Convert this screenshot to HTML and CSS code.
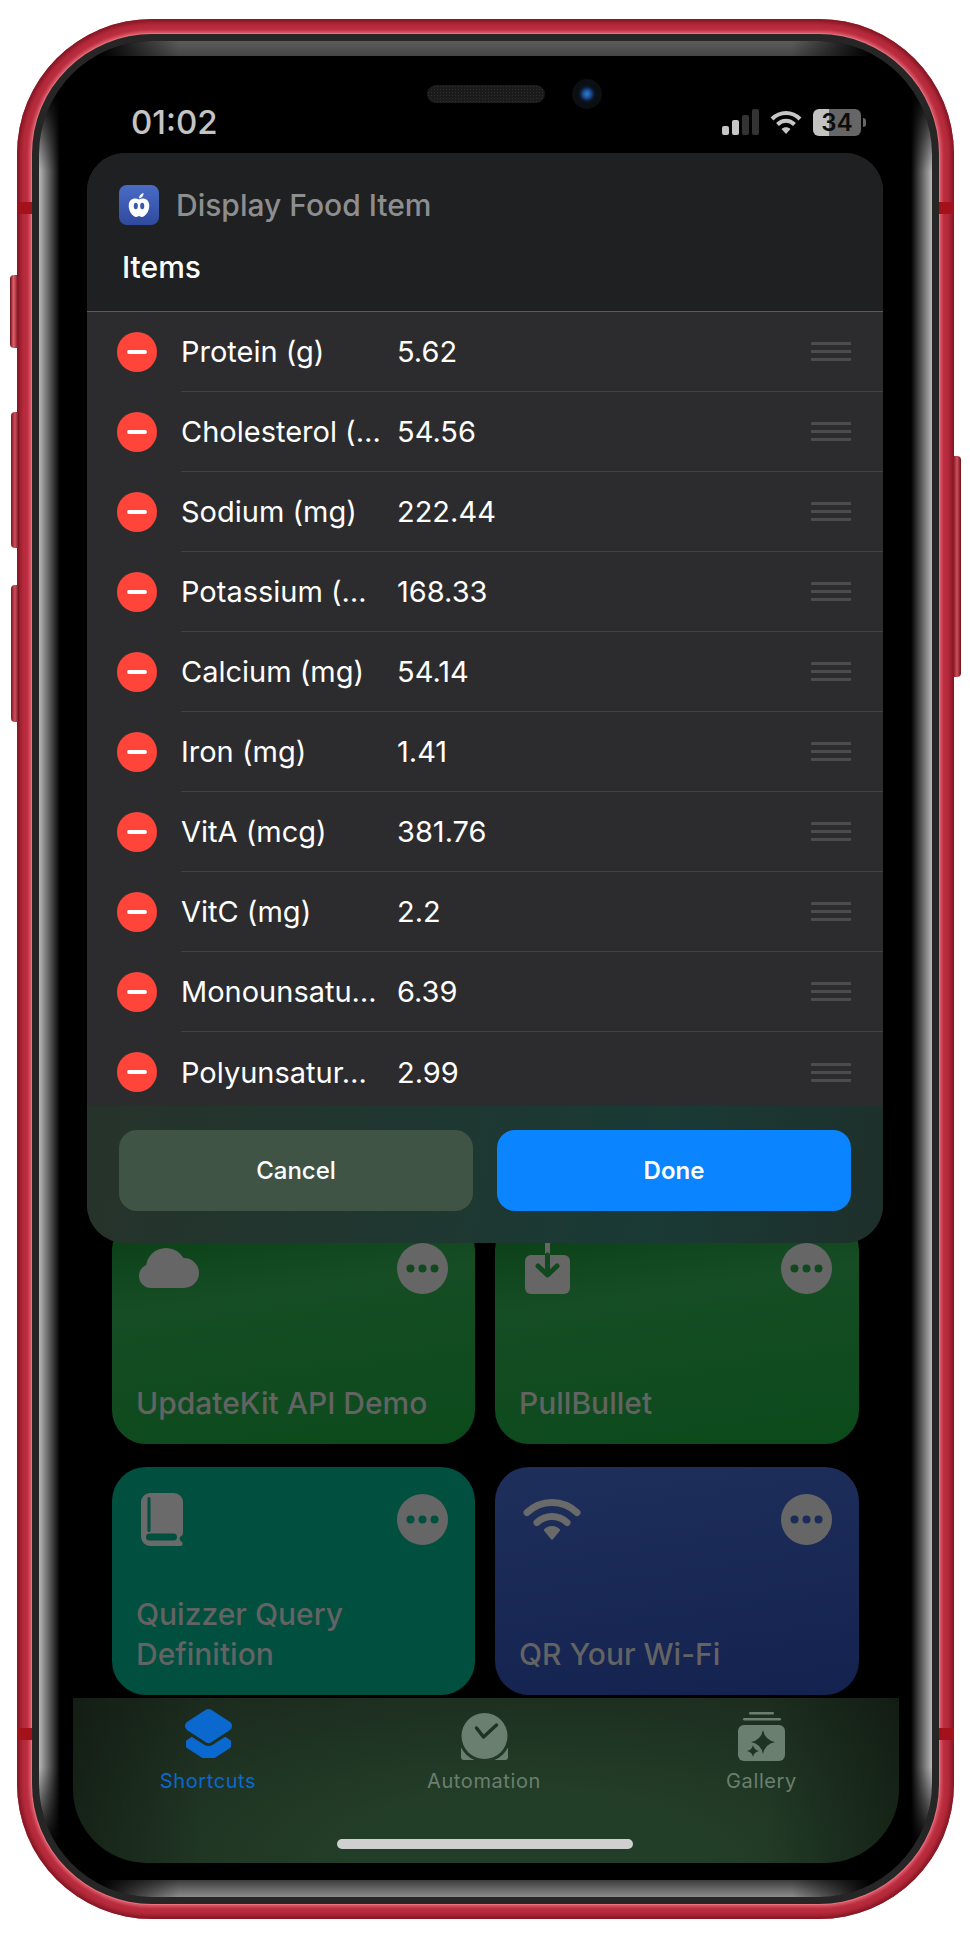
FILE: index.html
```html
<!DOCTYPE html>
<html lang="en">
<head>
    <meta charset="UTF-8">
    <title>Display Food Item</title>
    <link rel="stylesheet" href="styles.css">
</head>
<body>
    <div class="phone">
        <!-- Hardware buttons -->
        <span class="side-btn btn-mute"></span>
        <span class="side-btn btn-up"></span>
        <span class="side-btn btn-down"></span>
        <span class="side-btn btn-power"></span>
        <span class="band band-tl"></span>
        <span class="band band-tr"></span>
        <span class="band band-bl"></span>
        <span class="band band-br"></span>

        <div class="rim">
            <div class="bezel">
                <div class="screen">
                    <span class="speaker"></span>
                    <span class="camera"></span>

                    <div class="status">
                        <span class="time">01:02</span>
                        <div class="status-icons">
                            <svg width="37" height="26" viewBox="0 0 37 26">
                                <rect x="0" y="17" width="7" height="9" rx="2" fill="#c6c6c6"/>
                                <rect x="10" y="11" width="7" height="15" rx="2" fill="#c6c6c6"/>
                                <rect x="20" y="6" width="7" height="20" rx="2" fill="#333"/>
                                <rect x="30" y="0" width="7" height="26" rx="2" fill="#333"/>
                            </svg>
                            <svg width="32" height="24" viewBox="0 0 32 24">
                                <g fill="none" stroke="#c6c6c6" stroke-width="4">
                                    <path d="M2 9C10 1 22 1 30 9"/>
                                    <path d="M7.500 14.500C12.500 9.500 19.500 9.500 24.500 14.500"/>
                                </g>
                                <path d="M11.500 19C14 16.500 18 16.500 20.500 19L16 24Z" fill="#c6c6c6"/>
                            </svg>
                            <div class="battery"><span>34</span></div>
                        </div>
                    </div>

                    <div class="home">
                        <div class="shortcuts">
                            <div class="card green">
                                <div class="card-top">
                                    <svg class="glyph glyph-cloud" width="60" height="40" viewBox="0 0 60 40" fill="#666">
                                        <circle cx="12" cy="28" r="12"/>
                                        <circle cx="27" cy="20" r="20"/>
                                        <circle cx="45" cy="25" r="15"/>
                                        <rect x="12" y="20" width="33" height="20"/>
                                    </svg>
                                    <svg class="more" width="51" height="51" viewBox="0 0 51 51">
                                        <circle cx="25.500" cy="25.500" r="25.500" fill="#666"/>
                                        <circle cx="13.500" cy="25.500" r="4" fill="currentColor"/>
                                        <circle cx="25.500" cy="25.500" r="4" fill="currentColor"/>
                                        <circle cx="37.500" cy="25.500" r="4" fill="currentColor"/>
                                    </svg>
                                </div>
                                <div class="card-title">UpdateKit API Demo</div>
                            </div>
                            <div class="card green">
                                <div class="card-top">
                                    <svg class="glyph glyph-box" width="45" height="51" viewBox="0 0 45 51">
                                        <rect x="20" y="0" width="5" height="14" fill="#666"/>
                                        <rect x="0" y="12" width="45" height="39" rx="6" fill="#666"/>
                                        <path d="M22.500 12V30M13 23L22.500 32L32 23" fill="none" stroke="#11491f" stroke-width="5" stroke-linecap="round" stroke-linejoin="round"/>
                                    </svg>
                                    <svg class="more" width="51" height="51" viewBox="0 0 51 51">
                                        <circle cx="25.500" cy="25.500" r="25.500" fill="#666"/>
                                        <circle cx="13.500" cy="25.500" r="4" fill="currentColor"/>
                                        <circle cx="25.500" cy="25.500" r="4" fill="currentColor"/>
                                        <circle cx="37.500" cy="25.500" r="4" fill="currentColor"/>
                                    </svg>
                                </div>
                                <div class="card-title">PullBullet</div>
                            </div>
                            <div class="card teal">
                                <div class="card-top">
                                    <svg class="glyph glyph-book" width="42" height="53" viewBox="0 0 42 53">
                                        <path d="M9 0H33A9 9 0 0 1 42 9V40C42 42 40.500 43 39 44C38 46 39 47.500 41 49C42.500 50.500 41.500 53 39 53H9A9 9 0 0 1 0 44V9A9 9 0 0 1 9 0Z" fill="#6a6a6a"/>
                                        <rect x="6.500" y="4" width="3" height="35" rx="1.500" fill="#014f3f"/>
                                        <rect x="5" y="40.500" width="31" height="7" rx="3.500" fill="#014f3f"/>
                                    </svg>
                                    <svg class="more" width="51" height="51" viewBox="0 0 51 51">
                                        <circle cx="25.500" cy="25.500" r="25.500" fill="#666"/>
                                        <circle cx="13.500" cy="25.500" r="4" fill="currentColor"/>
                                        <circle cx="25.500" cy="25.500" r="4" fill="currentColor"/>
                                        <circle cx="37.500" cy="25.500" r="4" fill="currentColor"/>
                                    </svg>
                                </div>
                                <div class="card-title">Quizzer Query Definition</div>
                            </div>
                            <div class="card blue">
                                <div class="card-top">
                                    <svg class="glyph glyph-wifi" width="58" height="42" viewBox="0 0 58 42">
                                        <g fill="none" stroke="#6a6a6a" stroke-width="7" stroke-linecap="round">
                                            <path d="M4 14.500C18 1 40 1 54 14.500"/>
                                            <path d="M14 24.500C22.500 16.500 35.500 16.500 44 24.500"/>
                                        </g>
                                        <path d="M22.500 32C26 28.500 32 28.500 35.500 32L29 40Z" fill="#6a6a6a" stroke="#6a6a6a" stroke-width="3" stroke-linejoin="round"/>
                                    </svg>
                                    <svg class="more" width="51" height="51" viewBox="0 0 51 51">
                                        <circle cx="25.500" cy="25.500" r="25.500" fill="#666"/>
                                        <circle cx="13.500" cy="25.500" r="4" fill="currentColor"/>
                                        <circle cx="25.500" cy="25.500" r="4" fill="currentColor"/>
                                        <circle cx="37.500" cy="25.500" r="4" fill="currentColor"/>
                                    </svg>
                                </div>
                                <div class="card-title">QR Your Wi-Fi</div>
                            </div>
                        </div>
                    </div>

                    <!-- Tab bar -->
                    <div class="tabbar">
                        <div class="tab active">
                            <svg width="47" height="54" viewBox="0 0 47 54">
                                <mask id="stack-cut">
                                    <rect width="47" height="54" fill="#fff"/>
                                    <polygon points="5,18 23.500,6 42,18 23.500,30" fill="#000" stroke="#000" stroke-width="16" stroke-linejoin="round"/>
                                </mask>
                                <polygon mask="url(#stack-cut)" points="5,36 23.500,24 42,36 23.500,48" fill="#0a68cf" stroke="#0a68cf" stroke-width="10" stroke-linejoin="round"/>
                                <polygon points="5,18 23.500,6 42,18 23.500,30" fill="#0a68cf" stroke="#0a68cf" stroke-width="10" stroke-linejoin="round"/>
                            </svg>
                            <span>Shortcuts</span>
                        </div>
                        <div class="tab">
                            <svg width="47" height="54" viewBox="0 0 47 54">
                                <mask id="clock-cut">
                                    <rect width="47" height="54" fill="#fff"/>
                                    <circle cx="23.500" cy="28" r="26" fill="#000"/>
                                </mask>
                                <path mask="url(#clock-cut)" d="M0 39H47V49A3 3 0 0 1 44 52H3A3 3 0 0 1 0 49Z" fill="#6b7f70"/>
                                <circle cx="23.500" cy="28" r="23" fill="#6b7f70"/>
                                <path d="M15.500 20L22.500 29L35.500 17" fill="none" stroke="#1f3323" stroke-width="3.500" stroke-linecap="round" stroke-linejoin="round"/>
                            </svg>
                            <span>Automation</span>
                        </div>
                        <div class="tab">
                            <svg width="47" height="54" viewBox="0 0 47 54">
                                <rect x="11" y="4" width="25" height="2.500" rx="1.200" fill="#6b7f70"/>
                                <rect x="5" y="10" width="38" height="2.500" rx="1.200" fill="#6b7f70"/>
                                <rect x="0" y="17" width="47" height="36" rx="6" fill="#6b7f70"/>
                                <path transform="translate(25 34)" d="M0 -12Q2 -2 12 0Q2 2 0 12Q-2 2 -12 0Q-2 -2 0 -12Z" fill="#1f3323"/>
                                <path transform="translate(15 43)" d="M0 -6Q1 -1 6 0Q1 1 0 6Q-1 1 -6 0Q-1 -1 0 -6Z" fill="#1f3323"/>
                            </svg>
                            <span>Gallery</span>
                        </div>
                        <span class="home-bar"></span>
                    </div>

                    <!-- Sheet di atas layar -->
                    <div class="sheet">
                        <div class="sheet-head">
                            <div class="app-line">
                                <span class="app-icon">
                                    <svg width="24" height="26" viewBox="0 0 26 28">
                                        <path d="M13 8C9 6 3 7 2 13C1 20 6 27 10 27C11.500 27 12 26 13 26C14 26 14.500 27 16 27C20 27 25 20 24 13C23 7 17 6 13 8Z" fill="#fff"/>
                                        <path d="M13 7C13 4 15 1.500 18 1C18 4 16 6.500 13 7Z" fill="#fff"/>
                                        <ellipse cx="9.500" cy="15" rx="2.200" ry="3.500" fill="#3a58ad"/>
                                        <ellipse cx="16.500" cy="15" rx="2.200" ry="3.500" fill="#3a58ad"/>
                                    </svg>
                                </span>
                                <span class="app-name">Display Food Item</span>
                            </div>
                            <div class="sheet-label">Items</div>
                        </div>

                        <div class="rows">
                            <div class="row"><span class="minus"></span><div class="row-body"><span class="row-key">Protein (g)</span><span class="row-val">5.62</span><span class="grip"></span></div></div>
                            <div class="row"><span class="minus"></span><div class="row-body"><span class="row-key">Cholesterol (…</span><span class="row-val">54.56</span><span class="grip"></span></div></div>
                            <div class="row"><span class="minus"></span><div class="row-body"><span class="row-key">Sodium (mg)</span><span class="row-val">222.44</span><span class="grip"></span></div></div>
                            <div class="row"><span class="minus"></span><div class="row-body"><span class="row-key">Potassium (…</span><span class="row-val">168.33</span><span class="grip"></span></div></div>
                            <div class="row"><span class="minus"></span><div class="row-body"><span class="row-key">Calcium (mg)</span><span class="row-val">54.14</span><span class="grip"></span></div></div>
                            <div class="row"><span class="minus"></span><div class="row-body"><span class="row-key">Iron (mg)</span><span class="row-val">1.41</span><span class="grip"></span></div></div>
                            <div class="row"><span class="minus"></span><div class="row-body"><span class="row-key">VitA (mcg)</span><span class="row-val">381.76</span><span class="grip"></span></div></div>
                            <div class="row"><span class="minus"></span><div class="row-body"><span class="row-key">VitC (mg)</span><span class="row-val">2.2</span><span class="grip"></span></div></div>
                            <div class="row"><span class="minus"></span><div class="row-body"><span class="row-key">Monounsatu…</span><span class="row-val">6.39</span><span class="grip"></span></div></div>
                            <div class="row"><span class="minus"></span><div class="row-body"><span class="row-key">Polyunsatur…</span><span class="row-val">2.99</span><span class="grip"></span></div></div>
                        </div>

                        <div class="sheet-foot">
                            <button class="btn btn-cancel">Cancel</button>
                            <button class="btn btn-done">Done</button>
                        </div>
                    </div>
                </div>
            </div>
        </div>
    </div>
</body>
</html>
```

FILE: styles.css
```css
* {
    box-sizing: border-box;
}
body {
    margin: 0;
    background-color: white;
    font-family: Inter, "Noto Sans", sans-serif;
    color: white;
}
.phone {
    position: relative;
    width: 937px;
    height: 1900px;
    margin: 19px 0 0 17px;
    padding: 15px;
    border-radius: 135px;
    background-color: #b92c3e;
    box-shadow: inset 0 0 5px 3px #7f141f;
}
.side-btn {
    position: absolute;
    width: 8px;
    border-radius: 4px 0 0 4px;
    background: linear-gradient(to right, #6d0f18, #e0606c 45%, #7d1420);
}
.btn-mute {
    left: -7px;
    top: 256px;
    height: 73px;
}
.btn-up {
    left: -6px;
    top: 393px;
    height: 136px;
    background: linear-gradient(to right, #7d1420, #d0505c 50%, #6d0f18);
}
.btn-down {
    left: -6px;
    top: 566px;
    height: 137px;
    background: linear-gradient(to right, #7d1420, #d0505c 50%, #6d0f18);
}
.btn-power {
    right: -7px;
    top: 437px;
    height: 221px;
    border-radius: 0 4px 4px 0;
    background: linear-gradient(to right, #7d1420, #d0505c 50%, #6d0f18);
}
.band {
    position: absolute;
    width: 15px;
    height: 12px;
    background-color: #a3121a;
}
.band-tl {
    left: 0;
    top: 183px;
}
.band-tr {
    right: 0;
    top: 183px;
}
.band-bl {
    left: 0;
    top: 1709px;
}
.band-br {
    right: 0;
    top: 1709px;
}
.rim {
    height: 100%;
    padding: 7px;
    border-radius: 120px;
    background-color: #262626;
    box-shadow: 0 0 0 1px #e8727e, 0 0 3px 3px #db5a68;
}
.bezel {
    position: relative;
    height: 100%;
    padding: 15px 33px 34px 34px;
    border-radius: 113px;
    background-color: black;
    overflow: hidden;
}
.bezel::before {
    content: "";
    position: absolute;
    inset: 0;
    background:
        linear-gradient(to bottom, #5c5c5c, #454545) top / 100% 15px no-repeat,
        linear-gradient(to bottom, #3c3c3c, #8c8c8c) bottom / 100% 17px no-repeat;
    -webkit-mask-image: linear-gradient(to right, transparent 60px, black 140px, black 753px, transparent 833px);
    mask-image: linear-gradient(to right, transparent 60px, black 140px, black 753px, transparent 833px);
}
.bezel::after {
    content: "";
    position: absolute;
    inset: 0;
    background:
        linear-gradient(to right, #b8b8b8, black) left / 21px 100% no-repeat,
        linear-gradient(to left, #b8b8b8, black) right / 21px 100% no-repeat;
    -webkit-mask-image: linear-gradient(to bottom, transparent 50px, black 130px, black 1726px, transparent 1806px);
    mask-image: linear-gradient(to bottom, transparent 50px, black 130px, black 1726px, transparent 1806px);
}
.screen {
    position: relative;
    z-index: 1;
    display: flex;
    flex-direction: column;
    height: 100%;
    border-radius: 74px;
    background-color: black;
    overflow: hidden;
}
.speaker {
    position: absolute;
    left: 354px;
    top: 29px;
    width: 118px;
    height: 18px;
    border-radius: 9px;
    background-color: #1b1b1b;
    background-image: radial-gradient(#2f2f2f 1px, transparent 1px);
    background-size: 3px 3px;
}
.camera {
    position: absolute;
    left: 499px;
    top: 23px;
    width: 30px;
    height: 30px;
    border-radius: 50%;
    background: radial-gradient(circle, #2f7fd0 0, #1a4d94 4px, #0c1a33 7px, #0b0e13 9px);
}
.status {
    display: flex;
    justify-content: space-between;
    align-items: center;
    height: 132px;
    padding: 0 38px 0 58px;
    flex-shrink: 0;
}
.time {
    font-size: 33px;
    font-weight: 500;
    color: #c4c4c4;
}
.status-icons {
    display: flex;
    align-items: center;
    gap: 11px;
}
.battery {
    position: relative;
    width: 48px;
    height: 27px;
    border-radius: 6px;
    background: linear-gradient(to right, #c2c2c2 34%, #666 34%);
    color: #0c0c0c;
    font-size: 24px;
    font-weight: 600;
    line-height: 27px;
    text-align: center;
}
.battery::after {
    content: "";
    position: absolute;
    right: -5px;
    top: 9px;
    width: 3px;
    height: 9px;
    border-radius: 0 3px 3px 0;
    background-color: #666;
}
.home {
    display: flex;
    flex-direction: column;
    justify-content: flex-end;
    flex: 1;
    padding: 0 39px 3px;
}
.shortcuts {
    display: grid;
    grid-template-columns: 363px 364px;
    grid-auto-rows: 228px;
    gap: 23px 20px;
}
.card {
    display: flex;
    flex-direction: column;
    justify-content: space-between;
    padding: 27px 27px 21px 24px;
    border-radius: 34px;
}
.card.green {
    background: linear-gradient(172deg, #0c4118 8%, #164d24 35%, #0b4a1b 100%);
    color: #11491f;
}
.card.teal {
    background-color: #014f3f;
    color: #014f3f;
}
.card.blue {
    background: linear-gradient(172deg, #1f2f5c, #13224f);
    color: #1c2c59;
}
.card-top {
    display: flex;
    justify-content: space-between;
    align-items: flex-start;
}
.glyph-cloud {
    margin: 5px 0 0 3px;
}
.glyph-box {
    margin-left: 6px;
}
.glyph-book {
    margin: -1px 0 0 5px;
}
.glyph-wifi {
    margin: 4px 0 0 4px;
}
.card-title {
    max-width: 300px;
    font-size: 30px;
    font-weight: 500;
    line-height: 40px;
    color: #636363;
}
.tabbar {
    position: relative;
    display: grid;
    grid-template-columns: 270px 282px 273px;
    flex-shrink: 0;
    height: 165px;
    padding-top: 10px;
    background:
        linear-gradient(to right, rgba(0, 0, 0, 0.28), transparent 16%, transparent 84%, rgba(0, 0, 0, 0.32)),
        radial-gradient(ellipse at 55% 100%, #233e28 28%, #1b291d 92%);
}
.tab {
    display: flex;
    flex-direction: column;
    align-items: center;
    gap: 8px;
    font-size: 20px;
    line-height: 23px;
    letter-spacing: 0.6px;
    color: #6b7f70;
}
.tab.active {
    color: #0a68cf;
}
.home-bar {
    position: absolute;
    left: 264px;
    bottom: 14px;
    width: 296px;
    height: 10px;
    border-radius: 5px;
    background-color: #d0d0d0;
}
.sheet {
    position: absolute;
    left: 14px;
    top: 97px;
    width: 796px;
    height: 1090px;
    display: flex;
    flex-direction: column;
    border-radius: 38px;
    background-color: #2c2c2e;
    overflow: hidden;
}
.sheet-head {
    flex-shrink: 0;
    height: 159px;
    padding: 32px 0 0 32px;
    background-color: #1f2021;
    border-bottom: 1px solid #5a5a5a;
}
.app-line {
    display: flex;
    align-items: center;
    gap: 17px;
}
.app-icon {
    display: flex;
    align-items: center;
    justify-content: center;
    width: 40px;
    height: 40px;
    border-radius: 8px;
    background: linear-gradient(#4a6cc6, #2f4a9e);
}
.app-name {
    font-size: 30px;
    font-weight: 500;
    color: #8e8e90;
}
.sheet-label {
    margin: 24px 0 0 3px;
    font-size: 30px;
    font-weight: 500;
    line-height: 36px;
}
.rows {
    flex: 1;
    overflow: hidden;
}
.row {
    display: flex;
    align-items: center;
    height: 80px;
    padding-left: 30px;
}
.minus {
    position: relative;
    flex-shrink: 0;
    width: 40px;
    height: 40px;
    margin: -1px 24px 0 0;
    border-radius: 50%;
    background-color: #ff453a;
}
.minus::after {
    content: "";
    position: absolute;
    left: 10px;
    top: 18px;
    width: 20px;
    height: 4px;
    border-radius: 2px;
    background-color: white;
}
.row-body {
    display: flex;
    align-items: center;
    flex: 1;
    height: 80px;
    padding-right: 32px;
    border-bottom: 1px solid #444446;
    font-size: 29px;
}
.row:last-child .row-body {
    border-bottom: none;
}
.row-key {
    width: 216px;
    white-space: nowrap;
    overflow: hidden;
}
.row-val {
    flex: 1;
}
.grip {
    width: 40px;
    height: 19px;
    border-radius: 1px;
    background: linear-gradient(#4c4c4e 3px, transparent 3px, transparent 8px, #4c4c4e 8px, #4c4c4e 11px, transparent 11px, transparent 16px, #4c4c4e 16px);
}
.sheet-foot {
    display: flex;
    justify-content: space-between;
    flex-shrink: 0;
    height: 137px;
    padding: 24px 32px 0;
    background: linear-gradient(100deg, #26332b, #1a3a35 72%, #1e2f2b);
}
.btn {
    width: 354px;
    height: 81px;
    border: none;
    border-radius: 18px;
    color: white;
    font-family: inherit;
    font-size: 24px;
    font-weight: 500;
}
.btn-cancel {
    background-color: #3f5445;
}
.btn-done {
    background-color: #0a84ff;
    font-weight: 600;
}
```
